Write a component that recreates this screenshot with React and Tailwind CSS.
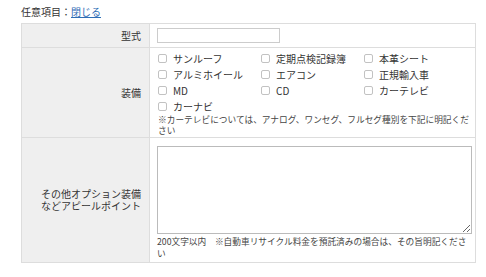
import React from "react";

const equipment = [
    ["サンルーフ", "定期点検記録簿", "本革シート"],
    ["アルミホイール", "エアコン", "正規輸入車"],
    ["MD", "CD", "カーテレビ"],
    ["カーナビ"],
];

function Check({ label }) {
    return (
        <label className="flex items-center h-[16px] gap-[6px]">
            <span className="w-[9px] h-[9px] border border-[#c2c2c2] rounded-[2px] bg-white shrink-0" />
            <span>{label}</span>
        </label>
    );
}

export default function App() {
    return (
        <div className="w-[486px] h-[277px] bg-white px-[21px] pt-[5px] text-[#333] font-['Noto_Sans_CJK_JP',sans-serif]">
            <div className="text-[10px] leading-[14px] h-[18px]">
                任意項目：
                <a href="#" className="text-[#2f6db5] underline">
                    閉じる
                </a>
            </div>
            <table className="w-[455px] table-fixed border-collapse text-[10px]">
                <colgroup>
                    <col className="w-[128px]" />
                    <col />
                </colgroup>
                <tbody>
                    <tr className="h-[24px]">
                        <th className="bg-[#efefef] border border-[#dddddd] text-right font-normal pr-[8px]">
                            型式
                        </th>
                        <td className="border border-[#dddddd] px-[7px] py-[3px]">
                            <input
                                type="text"
                                className="block w-[123px] h-[15px] border border-[#cccccc] bg-white"
                            />
                        </td>
                    </tr>
                    <tr>
                        <th className="bg-[#efefef] border border-[#dddddd] text-right font-normal pr-[8px]">
                            装備
                        </th>
                        <td className="border border-[#dddddd] pl-[8px] pr-[3px] pt-[2px] pb-[1px]">
                            {equipment.map((row, i) => (
                                <div key={i} className="grid grid-cols-[103px_103px_103px]">
                                    {row.map((label) => (
                                        <Check key={label} label={label} />
                                    ))}
                                </div>
                            ))}
                            <p className="text-[8.7px] leading-[11px] text-[#444]">
                                ※カーテレビについては、アナログ、ワンセグ、フルセグ種別を下記に明記ください
                            </p>
                        </td>
                    </tr>
                    <tr>
                        <th className="bg-[#efefef] border border-[#dddddd] text-right font-normal pr-[8px] leading-[12px]">
                            <div>その他オプション装備</div>
                            <div>などアピールポイント</div>
                        </th>
                        <td className="border border-[#dddddd] pl-[7px] pr-[3px] pt-[8px] pb-[2px]">
                            <textarea className="block w-[315px] h-[88px] border border-[#bbbbbb] bg-white resize-y" />
                            <p className="text-[8.7px] leading-[12px] mt-[2px] text-[#444]">
                                200文字以内　※自動車リサイクル料金を預託済みの場合は、その旨明記ください
                            </p>
                        </td>
                    </tr>
                </tbody>
            </table>
        </div>
    );
}
